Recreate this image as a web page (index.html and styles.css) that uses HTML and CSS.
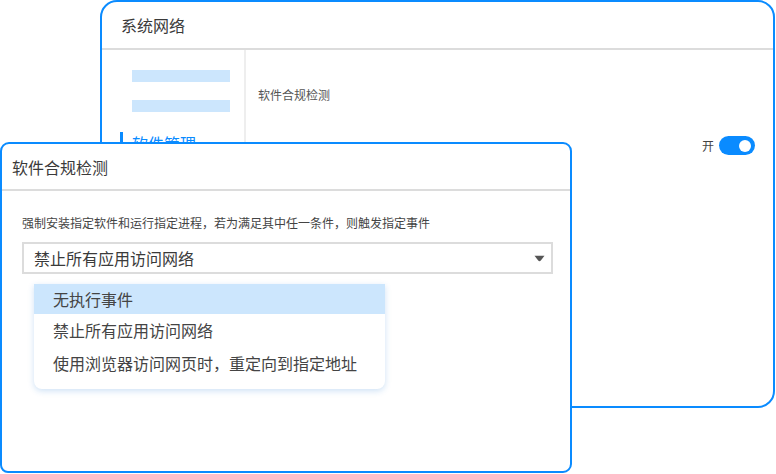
FILE: index.html
```html
<!DOCTYPE html>
<html lang="zh">
<head>
<meta charset="utf-8">
<link rel="stylesheet" href="styles.css">
</head>
<body>
<div class="desk">
  <div class="win back">
    <div class="win-head">系统网络</div>
    <div class="back-body">
      <div class="side">
        <div class="ph"></div>
        <div class="ph"></div>
        <div class="side-item active">软件管理</div>
      </div>
      <div class="main">
        <div class="main-title">软件合规检测</div>
        <div class="switch-row">
          <span class="switch-label">开</span>
          <span class="switch"><span class="knob"></span></span>
        </div>
      </div>
    </div>
  </div>

  <div class="win front">
    <div class="win-head">软件合规检测</div>
    <div class="front-body">
      <div class="desc">强制安装指定软件和运行指定进程，若为满足其中任一条件，则触发指定事件</div>
      <div class="select">
        <span>禁止所有应用访问网络</span>
        <svg class="caret" width="11" height="7" viewBox="0 0 11 7"><path d="M0.5 0.8 H10.5 L7 5.3 Q5.5 7 4 5.3 Z" fill="#555"/></svg>
      </div>
    </div>
    <ul class="menu">
      <li class="sel">无执行事件</li>
      <li>禁止所有应用访问网络</li>
      <li>使用浏览器访问网页时，重定向到指定地址</li>
    </ul>
  </div>
</div>
</body>
</html>
```

FILE: styles.css
```css
* { box-sizing: border-box; }
html, body { margin: 0; padding: 0; background: #fff; }
body {
  font-family: "Noto Sans CJK SC", "Noto Sans", sans-serif;
  color: #444;
  width: 776px;
  height: 474px;
  overflow: hidden;
}
.desk { position: relative; width: 776px; height: 474px; }

.win {
  position: absolute;
  background: #fff;
  border: 2px solid #0a8bff;
  display: flex;
  flex-direction: column;
}
.back {
  left: 100px;
  top: 0;
  width: 675px;
  height: 408px;
  border-radius: 17px;
}
.front {
  left: 0;
  top: 142px;
  width: 572px;
  height: 331px;
  border-radius: 9px 9px 9px 8px;
}

.win-head {
  height: 48px;
  flex: none;
  display: flex;
  align-items: center;
  padding-left: 19px;
  font-size: 16px;
  color: #3a3a3a;
  border-bottom: 2px solid #dcdcdc;
}
.front .win-head { padding-left: 10px; height: 47px; }

.back-body { flex: 1; display: flex; }
.side {
  width: 144px;
  flex: none;
  border-right: 2px solid #eeeeee;
  padding: 20px 0 0 30px;
  display: flex;
  flex-direction: column;
}
.ph {
  width: 98px;
  height: 12px;
  background: #cce6fd;
  margin-bottom: 18px;
}
.side-item {
  margin-left: -12px;
  padding-left: 9px;
  font-size: 16px;
  line-height: 22px;
  border-left: 3px solid #0a8bff;
  color: #0a8bff;
  margin-top: 2px;
}

.main { flex: 1; padding: 37px 20px 0 12px; }
.main-title { font-size: 12px; color: #555; line-height: 16px; }
.switch-row {
  display: flex;
  justify-content: flex-end;
  align-items: center;
  gap: 5px;
  margin-top: 33px;
  margin-right: -2px;
}
.switch-label { font-size: 12px; color: #444; }
.switch {
  width: 36px;
  height: 19px;
  border-radius: 10px;
  background: #0a8bff;
  display: flex;
  align-items: center;
  justify-content: flex-end;
  padding-right: 4px;
}
.knob { width: 12px; height: 12px; border-radius: 50%; background: #fff; }

.front-body { padding: 23px 17px 0 20px; }
.desc { font-size: 12px; line-height: 17px; color: #444; }
.select {
  margin-top: 11px;
  height: 32px;
  border: 2px solid #dcdcdc;
  display: flex;
  align-items: center;
  justify-content: space-between;
  padding: 0 6px 0 10px;
  font-size: 16px;
  color: #3a3a3a;
}
.caret { margin-top: 1px; }

.menu {
  position: absolute;
  left: 32px;
  top: 140px;
  width: 351px;
  margin: 0;
  padding: 0 0 9px 0;
  list-style: none;
  background: #fff;
  border-radius: 0 0 8px 8px;
  box-shadow: 0 2px 6px rgba(30, 120, 210, 0.22);
}
.menu li {
  height: 31px;
  line-height: 31px;
  padding-left: 19px;
  font-size: 16px;
  color: #444;
}
.menu li + li { height: 33px; line-height: 33px; }
.menu li.sel { background: #cce6fd; height: 30px; line-height: 30px; }
```
